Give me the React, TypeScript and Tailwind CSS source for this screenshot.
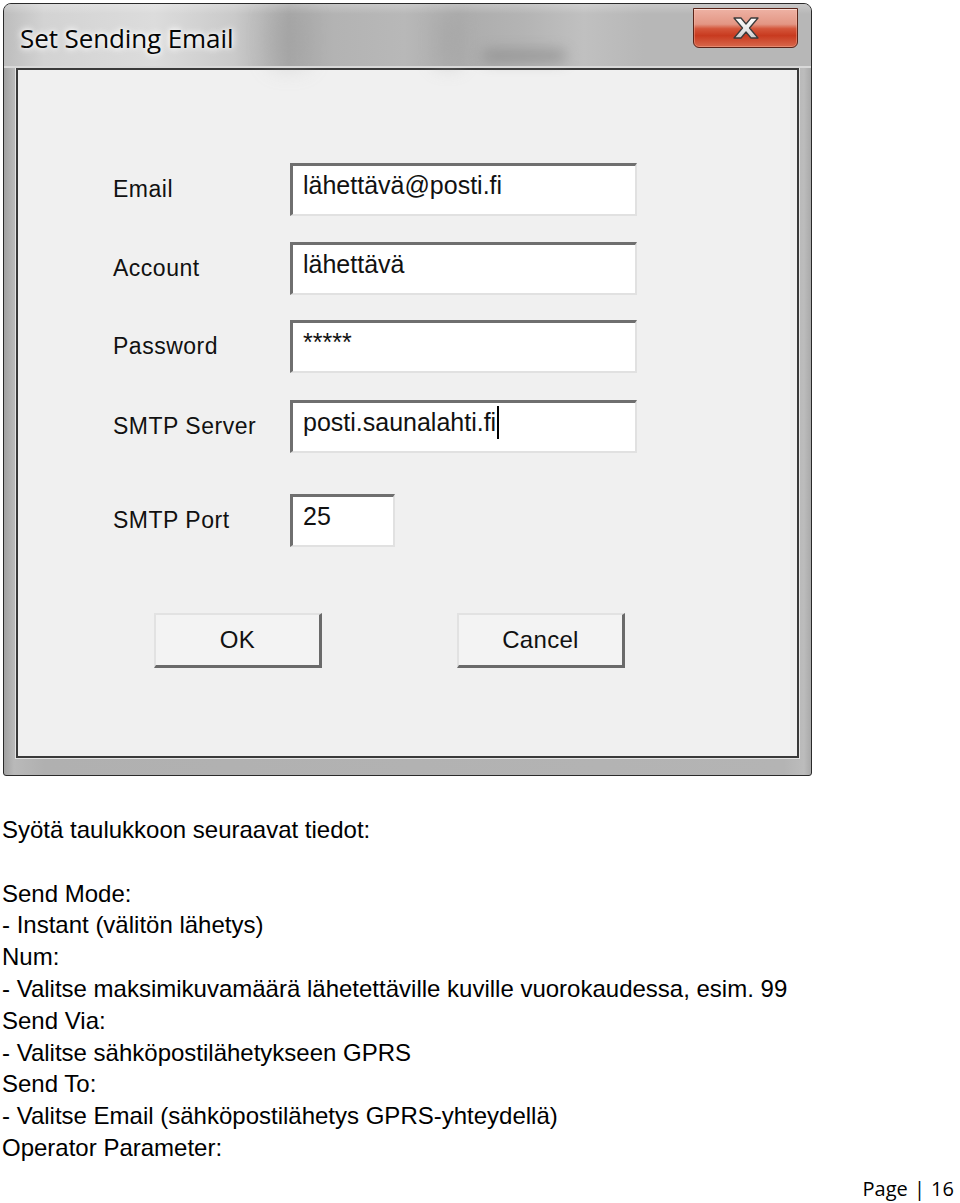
import React from "react";

function XGlyph() {
  return (
    <svg width="26" height="22" viewBox="0 0 26 22" className="block">
      <defs>
        <linearGradient id="xg" x1="0" y1="0" x2="0" y2="1">
          <stop offset="0" stopColor="#ffffff" />
          <stop offset="0.6" stopColor="#e6e6e6" />
          <stop offset="1" stopColor="#c8c8c8" />
        </linearGradient>
      </defs>
      <polygon
        points="1,1 8,1 13,7 18,1 25,1 16.5,11 25,21 18,21 13,15 8,21 1,21 9.5,11"
        fill="url(#xg)"
        stroke="#3b3b3b"
        strokeWidth="1.3"
        strokeLinejoin="round"
      />
    </svg>
  );
}

function Field({
  label,
  value,
  width,
  caret,
  mt,
}: {
  label: string;
  value: string;
  width: string;
  caret?: boolean;
  mt: string;
}) {
  return (
    <div className={`flex items-center ${mt}`}>
      <div className="w-[177px] text-[23px] leading-none tracking-[0.5px] text-[#111111]">
        {label}
      </div>
      <div
        className={`${width} h-[53px] bg-white border-solid border-t-[3px] border-l-[3px] border-r-2 border-b-2 border-t-[#6f6f6f] border-l-[#6f6f6f] border-r-[#e1e1e1] border-b-[#e1e1e1] pl-[10px] pt-[7px]`}
      >
        <div className="flex items-start text-[25px] leading-none text-[#111111]">
          <span>{value}</span>
          {caret && <span className="ml-[1px] mt-[-4px] w-[2px] h-[33px] bg-black" />}
        </div>
      </div>
    </div>
  );
}

function Btn({ label }: { label: string }) {
  return (
    <div className="w-[168px] h-[55px] bg-[#f3f3f3] border-solid border-t-2 border-l-2 border-r-[3px] border-b-[3px] border-t-[#e2e2e2] border-l-[#e2e2e2] border-r-[#6a6a6a] border-b-[#6a6a6a] flex items-center justify-center text-[24px] leading-none text-[#111111] tracking-[0.3px]">
      {label}
    </div>
  );
}

export default function App() {
  return (
    <div className="w-[960px] h-[1203px] bg-white font-['Liberation_Sans',Arial,sans-serif] overflow-hidden">
      <div className="pt-[3px] pl-[3px]">
        <div className="relative w-[809px] h-[773px] rounded-t-[8px] rounded-b-[3px] border border-[#2a2a2a] bg-[linear-gradient(90deg,#a2a2a2_0px,#b9b9b9_10px,#b0b0b0_40px,#b4b4b4_780px,#bcbcbc_800px,#a4a4a4_809px)] flex flex-col overflow-hidden">
          {/* title bar */}
          <div className="relative h-[64px] flex items-start justify-between bg-[linear-gradient(90deg,#bdbdbd_0px,#d3d3d3_40px,#dcdcdc_150px,#cacaca_230px,#a8a8a8_285px,#b3b3b3_330px,#b8b8b8_400px,#acacac_455px,#b4b4b4_520px,#c0c0c0_580px,#b7b7b7_640px,#b7b7b7_809px)]">
            <div className="absolute left-0 right-0 top-0 h-[10px] bg-[linear-gradient(180deg,rgba(255,255,255,0.25),rgba(255,255,255,0))]" />
            <div className="absolute left-[478px] top-[46px] w-[84px] h-[12px] rounded-full bg-[#808080] blur-[7px] opacity-60" />
            <div className="absolute left-[432px] top-[12px] w-[24px] h-[50px] bg-[#a0a0a0] blur-[10px] opacity-40" />
            <div className="absolute left-[268px] top-[8px] w-[34px] h-[54px] bg-[#9e9e9e] blur-[12px] opacity-35" />
            <div className="absolute left-0 right-0 bottom-0 h-[2px] bg-[#d9d9d9]" />
            <div className="relative pl-[16px] pt-[15px] font-['Open_Sans',sans-serif] text-[26px] text-[#050505] [text-shadow:0_0_10px_#ffffff,0_0_6px_#ffffff,0_0_3px_#f0f0f0] tracking-[-0.1px]">
              Set Sending Email
            </div>
            <div className="relative mt-[4px] mr-[13px] w-[105px] h-[40px] rounded-b-[6px] border border-[#5a2419] bg-[linear-gradient(180deg,#eeb2a4_0%,#e39684_40%,#d4553a_52%,#c83a1f_70%,#d8684c_100%)] shadow-[inset_0_1px_0_rgba(255,255,255,0.5),inset_0_0_0_1px_rgba(255,200,180,0.35)] flex items-center justify-center">
              <XGlyph />
            </div>
          </div>
          {/* client */}
          <div className="mx-[12px] h-[690px] border-2 border-[#3a3a3a] bg-[#f0f0f0] shadow-[0_0_0_1px_#e4e4e4] pl-[95px] pt-[93px]">
            <Field label="Email" value="lähettävä@posti.fi" width="w-[347px]" mt="mt-0" />
            <Field label="Account" value="lähettävä" width="w-[347px]" mt="mt-[26px]" />
            <Field label="Password" value="*****" width="w-[347px]" mt="mt-[25px]" />
            <Field label="SMTP Server" value="posti.saunalahti.fi" width="w-[347px]" caret mt="mt-[27px]" />
            <Field label="SMTP Port" value="25" width="w-[105px]" mt="mt-[41px]" />
            <div className="flex gap-[135px] mt-[66px] ml-[41px]">
              <Btn label="OK" />
              <Btn label="Cancel" />
            </div>
          </div>
        </div>
      </div>

      <div className="mt-[38px] pl-[2px] text-[24px] leading-[31.8px] text-black">
        <div>Syötä taulukkoon seuraavat tiedot:</div>
        <div>&nbsp;</div>
        <div>Send Mode:</div>
        <div>- Instant (välitön lähetys)</div>
        <div>Num:</div>
        <div>- Valitse maksimikuvamäärä lähetettäville kuville vuorokaudessa, esim. 99</div>
        <div>Send Via:</div>
        <div>- Valitse sähköpostilähetykseen GPRS</div>
        <div>Send To:</div>
        <div>- Valitse Email (sähköpostilähetys GPRS-yhteydellä)</div>
        <div>Operator Parameter:</div>
      </div>

      <div className="flex justify-end pr-[6px] mt-[15px]">
        <div className="font-['Open_Sans',sans-serif] text-[20px] leading-none text-black">
          Page <span className="mx-[1px]">|</span> 16
        </div>
      </div>
    </div>
  );
}
